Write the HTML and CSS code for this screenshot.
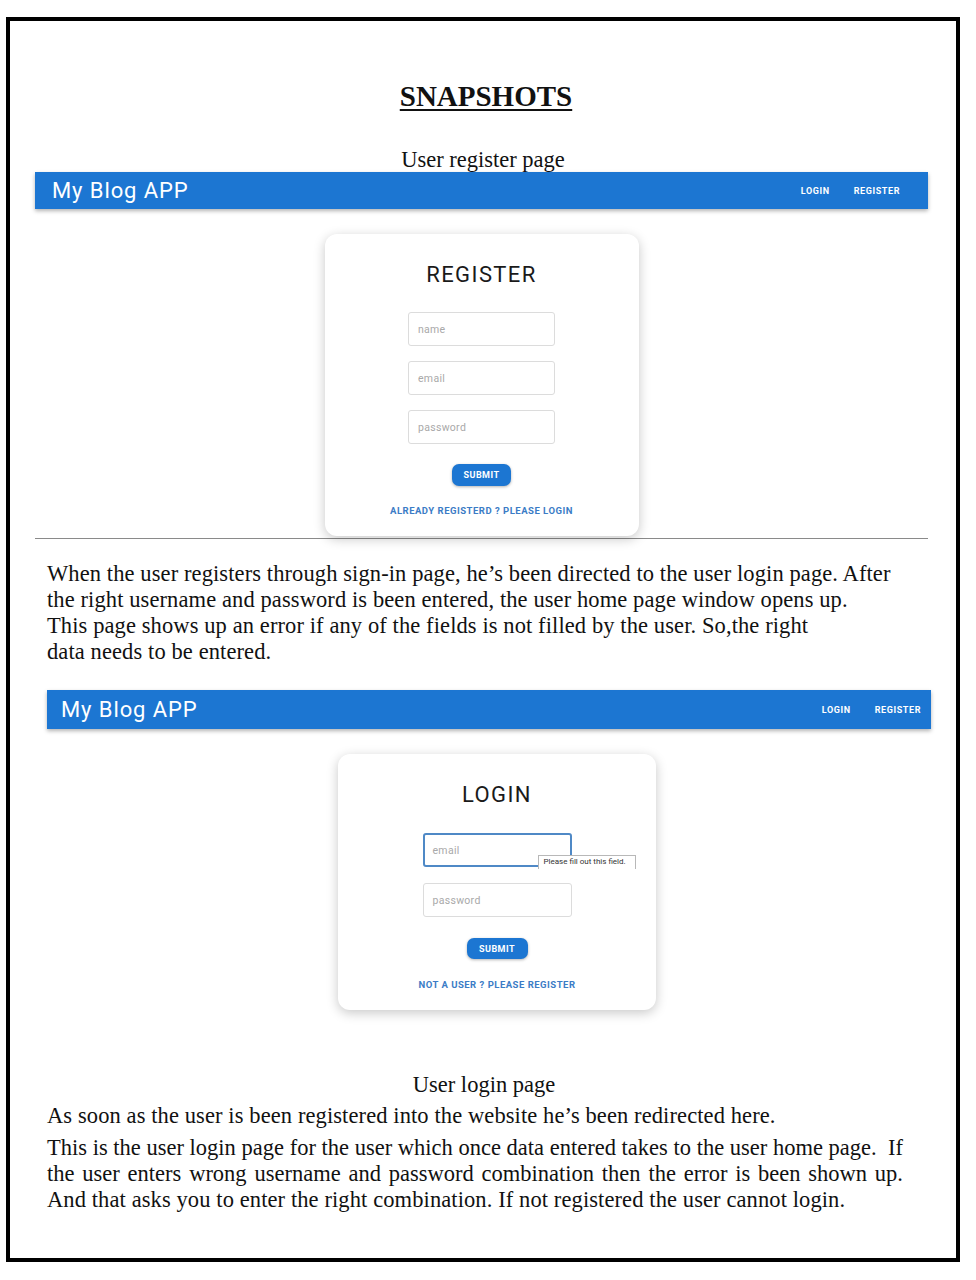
FILE: index.html
```html
<!DOCTYPE html>
<html lang="en">
<head>
<meta charset="utf-8">
<title>Snapshots</title>
<link rel="stylesheet" href="styles.css">
</head>
<body>
<div class="sheet">
  <h1 class="title">SNAPSHOTS</h1>
  <p class="caption caption-reg">User register page</p>

  <section class="shot shot-reg">
    <header class="appbar">
      <span class="brand">My Blog APP</span>
      <nav class="nav"><span>LOGIN</span><span>REGISTER</span></nav>
    </header>
    <div class="stage">
      <div class="card card-reg">
        <h2 class="card-title">REGISTER</h2>
        <div class="fields">
          <div class="field"><span class="ph">name</span></div>
          <div class="field"><span class="ph">email</span></div>
          <div class="field"><span class="ph">password</span></div>
        </div>
        <div class="btn">SUBMIT</div>
        <div class="link">ALREADY REGISTERD ? PLEASE LOGIN</div>
      </div>
    </div>
    <div class="rule"></div>
  </section>

  <div class="para para-1">
    <div class="line">When the user registers through sign-in page, he’s been directed to the user login page. After</div>
    <div class="line">the right username and password is been entered, the user home page window opens up.</div>
    <div class="line">This page shows up an error if any of the fields is not filled by the user. So,the right</div>
    <div class="line">data needs to be entered.</div>
  </div>

  <section class="shot shot-login">
    <header class="appbar appbar-2">
      <span class="brand">My Blog APP</span>
      <nav class="nav"><span>LOGIN</span><span>REGISTER</span></nav>
    </header>
    <div class="stage stage-2">
      <div class="card card-login">
        <h2 class="card-title">LOGIN</h2>
        <div class="fields fields-login">
          <div class="field field-focus"><span class="ph">email</span>
            <div class="tip">Please fill out this field.</div>
          </div>
          <div class="field"><span class="ph">password</span></div>
        </div>
        <div class="btn btn-login">SUBMIT</div>
        <div class="link link-login">NOT A USER ? PLEASE REGISTER</div>
      </div>
    </div>
  </section>

  <p class="caption caption-login">User login page</p>
  <div class="para para-2">
    <div class="line">As soon as the user is been registered into the website he’s been redirected here.</div>
  </div>
  <div class="para para-3">
    <div class="line jline jline-tight">This is the user login page for the user which once data entered takes to the user home page.&nbsp; If</div>
    <div class="line jline">the user enters wrong username and password combination then the error is been shown up.</div>
    <div class="line">And that asks you to enter the right combination. If not registered the user cannot login.</div>
  </div>
</div>
</body>
</html>
```

FILE: styles.css
```css
* { box-sizing: border-box; }
html, body { margin: 0; padding: 0; background: #fff; }
body { font-family: "Liberation Serif", "Times New Roman", serif; color: #111; }

.sheet {
  margin: 17px 0 0 6px;
  width: 954px;
  height: 1245px;
  border: 4px solid #000;
  overflow: hidden;
}

.title {
  margin: 58px 0 0 0;
  text-align: center;
  font-size: 29px;
  line-height: 34px;
  font-weight: bold;
  text-decoration: underline;
  text-decoration-thickness: 2px;
  text-underline-offset: 3px;
  padding-left: 6px;
}

.caption {
  margin: 0;
  text-align: center;
  font-size: 22.5px;
  line-height: 24px;
}
.caption-reg { margin-top: 35px; padding-left: 0; }
.caption-login { margin-top: 63px; padding-left: 2px; }

.shot { font-family: Roboto, "Liberation Sans", sans-serif; }
.shot-reg { margin-left: 25px; width: 893px; }
.shot-login { margin-left: 37px; width: 884px; margin-top: 25px; }

.appbar {
  height: 37px;
  background: #1c76d2;
  color: #fff;
  display: flex;
  align-items: center;
  justify-content: space-between;
  padding: 0 28px 0 17px;
  box-shadow: 0 2px 4px rgba(0,0,0,0.3);
}
.appbar-2 { height: 39px; padding: 0 10px 0 14px; }

.brand {
  font-size: 22px;
  letter-spacing: 0.9px;
  font-weight: 400;
}
.nav { display: flex; gap: 24px; font-size: 9px; font-weight: 700; letter-spacing: 0.6px; }

.stage { padding-top: 25px; display: flex; justify-content: center; }
.stage-2 { padding-left: 16px; }

.card {
  background: #fff;
  border-radius: 12px;
  box-shadow: 0 3px 12px rgba(0,0,0,0.22);
  display: flex;
  flex-direction: column;
  align-items: center;
}
.card-reg { width: 314px; height: 302px; padding-top: 29px; }
.card-login { width: 318px; height: 256px; padding-top: 29px; }

.card-title {
  margin: 0;
  font-size: 22px;
  line-height: 24px;
  font-weight: 400;
  letter-spacing: 1.4px;
  color: #1a1a1a;
}

.fields { margin-top: 25px; display: flex; flex-direction: column; gap: 15px; }
.fields-login { margin-top: 26px; gap: 16px; }

.field {
  position: relative;
  width: 147px;
  height: 34px;
  border: 1px solid #dcdcdc;
  border-radius: 3px;
  display: flex;
  align-items: center;
  padding-left: 9px;
}
.fields-login .field { width: 149px; height: 34px; }
.field-focus { border: 2px solid #4f89c6; padding-left: 8px; }

.ph { font-size: 10.5px; color: #a9a9a9; letter-spacing: 0.3px; }

.tip {
  position: absolute;
  left: 113px;
  top: 20px;
  width: 98px;
  height: 14px;
  background: #fff;
  border: 1px solid #b8b8b8;
  border-bottom: none;
  font-size: 8px;
  line-height: 12px;
  color: #333;
  padding-left: 5px;
  white-space: nowrap;
}

.btn {
  margin-top: 20px;
  width: 59px;
  height: 22px;
  border-radius: 7px;
  background: #1c76d2;
  color: #fff;
  font-size: 9px;
  font-weight: 700;
  letter-spacing: 0.5px;
  display: flex;
  align-items: center;
  justify-content: center;
  box-shadow: 0 1px 3px rgba(0,0,0,0.3);
}
.btn-login { margin-top: 21px; width: 61px; height: 21px; }

.link {
  margin-top: 19px;
  font-size: 9.5px;
  line-height: 12px;
  font-weight: 700;
  color: #3b7cc6;
  letter-spacing: 0.5px;
}
.link-login { margin-top: 20px; }

.rule { margin-top: 2px; height: 1px; background: #8a8a8a; }

.para {
  margin-left: 37px;
  font-size: 22.5px;
  letter-spacing: 0.1px;
  line-height: 26px;
  white-space: nowrap;
}
.para-1 { margin-top: 22px; }
.para-2 { margin-top: 6px; }
.para-3 { margin-top: 6px; width: 856px; }
.jline { text-align: justify; text-align-last: justify; white-space: normal; letter-spacing: 0; }
.jline-tight { word-spacing: -1.5px; }
```
